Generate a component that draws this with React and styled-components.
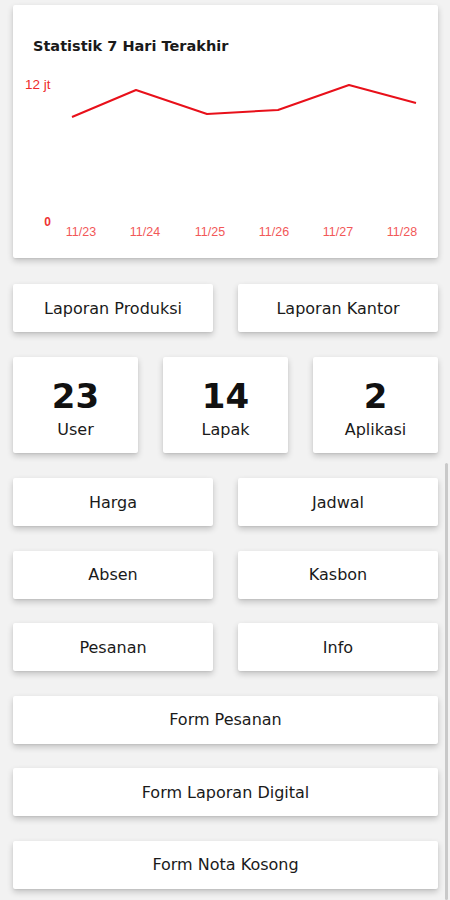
import React from "react";
import styled, { createGlobalStyle } from "styled-components";

const GlobalStyle = createGlobalStyle`
  html, body {
    margin: 0;
    padding: 0;
    background: #f2f2f2;
  }
  body {
    font-family: "DejaVu Sans", Verdana, sans-serif;
    color: #1a1a1a;
  }
`;

const Page = styled.div`
  position: relative;
  width: 450px;
  min-height: 900px;
  box-sizing: border-box;
  padding: 5px 12px 0 13px;
  display: flex;
  flex-direction: column;
  gap: 25px;
  background: #f2f2f2;
  overflow: hidden;
`;

const Card = styled.div`
  background: #fff;
  border-radius: 2px;
  box-shadow: 0 3px 6px rgba(0, 0, 0, 0.2), 0 1px 2px rgba(0, 0, 0, 0.06);
`;

const ChartCard = styled(Card)`
  height: 253px;
  margin-bottom: 1px;
  display: flex;
  flex-direction: column;
`;

const ChartTitle = styled.div`
  padding: 33px 0 0 20px;
  height: 17px;
  line-height: 17px;
  font-size: 14.5px;
  font-weight: 700;
  color: #1a1a1a;
`;

const ChartSvg = styled.svg`
  display: block;
  margin-top: 15px;
`;

const Row = styled.div`
  display: grid;
  grid-template-columns: repeat(${(p) => p.$cols || 2}, 1fr);
  column-gap: 25px;
`;

const Button = styled(Card)`
  height: 48px;
  display: flex;
  align-items: center;
  justify-content: center;
  font-size: 16px;
  color: #1a1a1a;
`;

const StatCard = styled(Card)`
  height: 96px;
  display: flex;
  flex-direction: column;
  align-items: center;
  padding-top: 19px;
  box-sizing: border-box;
`;

const StatNumber = styled.div`
  font-size: 34px;
  font-weight: 700;
  line-height: 40px;
  color: #111;
`;

const StatLabel = styled.div`
  font-size: 16px;
  line-height: 20px;
  margin-top: 4px;
  color: #1a1a1a;
`;

const Menu = styled.div`
  display: flex;
  flex-direction: column;
  gap: 24.6px;
`;

const ScrollBar = styled.div`
  position: absolute;
  right: 2px;
  top: 463px;
  bottom: 0;
  width: 3px;
  border-radius: 2px;
  background: #c9c9c9;
`;

const points = [
  [59, 47],
  [123, 20],
  [194, 44],
  [265, 40],
  [336, 15],
  [403, 33],
];
const dates = [
  ["11/23", 68],
  ["11/24", 132],
  ["11/25", 197],
  ["11/26", 261],
  ["11/27", 325],
  ["11/28", 389],
];

function Chart() {
  return (
    <ChartCard>
      <ChartTitle>Statistik 7 Hari Terakhir</ChartTitle>
      <ChartSvg width="425" height="180" viewBox="0 0 425 180">
        <text
          x="12"
          y="18.5"
          fontFamily="Liberation Sans, Arial, sans-serif"
          fontSize="13.5"
          fill="#ee2a2a"
        >
          12 jt
        </text>
        <text
          x="38"
          y="156"
          textAnchor="end"
          fontFamily="Liberation Sans, Arial, sans-serif"
          fontSize="12"
          fontWeight="700"
          fill="#ee3333"
        >
          0
        </text>
        <polyline
          points={points.map((p) => p.join(",")).join(" ")}
          fill="none"
          stroke="#e8101a"
          strokeWidth="2"
          strokeLinejoin="round"
        />
        {dates.map(([d, x]) => (
          <text
            key={d}
            x={x}
            y="166"
            textAnchor="middle"
            fontFamily="Liberation Sans, Arial, sans-serif"
            fontSize="12.5"
            fill="#f25858"
          >
            {d}
          </text>
        ))}
      </ChartSvg>
    </ChartCard>
  );
}

export default function App() {
  return (
    <>
      <GlobalStyle />
      <Page>
        <Chart />
        <Row $cols={2}>
          <Button>Laporan Produksi</Button>
          <Button>Laporan Kantor</Button>
        </Row>
        <Row $cols={3}>
          <StatCard>
            <StatNumber>23</StatNumber>
            <StatLabel>User</StatLabel>
          </StatCard>
          <StatCard>
            <StatNumber>14</StatNumber>
            <StatLabel>Lapak</StatLabel>
          </StatCard>
          <StatCard>
            <StatNumber>2</StatNumber>
            <StatLabel>Aplikasi</StatLabel>
          </StatCard>
        </Row>
        <Menu>
          <Row $cols={2}>
            <Button>Harga</Button>
            <Button>Jadwal</Button>
          </Row>
          <Row $cols={2}>
            <Button>Absen</Button>
            <Button>Kasbon</Button>
          </Row>
          <Row $cols={2}>
            <Button>Pesanan</Button>
            <Button>Info</Button>
          </Row>
          <Button>Form Pesanan</Button>
          <Button>Form Laporan Digital</Button>
          <Button>Form Nota Kosong</Button>
        </Menu>
        <ScrollBar />
      </Page>
    </>
  );
}
